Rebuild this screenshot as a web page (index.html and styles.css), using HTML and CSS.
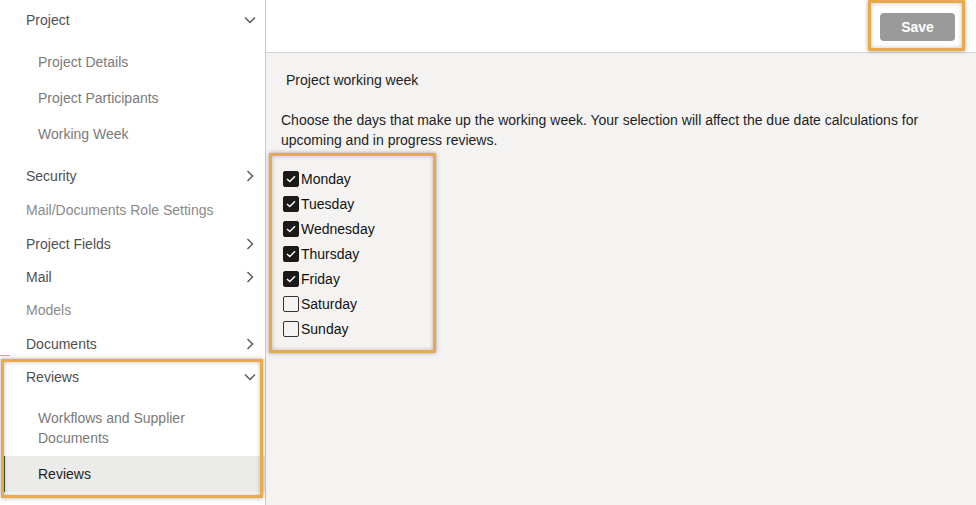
FILE: index.html
```html
<!DOCTYPE html>
<html lang="en">
<head>
<meta charset="utf-8">
<title>Project working week</title>
<link rel="stylesheet" href="styles.css">
</head>
<body>
<div class="app">
  <nav class="sidebar">
    <div class="nav-item first"><span>Project</span>
      <svg class="chev" width="12" height="8" viewBox="0 0 12 8"><path d="M1 1.5 L6 6.5 L11 1.5" fill="none" stroke="#555" stroke-width="1.4"/></svg>
    </div>
    <div class="sub">
      <div class="sub-item">Project Details</div>
      <div class="sub-item">Project Participants</div>
      <div class="sub-item">Working Week</div>
    </div>
    <div class="nav-item"><span>Security</span>
      <svg class="chev" width="12" height="12" viewBox="0 0 12 12"><path d="M3.5 1 L8.5 6 L3.5 11" fill="none" stroke="#555" stroke-width="1.4"/></svg>
    </div>
    <div class="nav-item muted"><span>Mail/Documents Role Settings</span></div>
    <div class="nav-item tight"><span>Project Fields</span>
      <svg class="chev" width="12" height="12" viewBox="0 0 12 12"><path d="M3.5 1 L8.5 6 L3.5 11" fill="none" stroke="#555" stroke-width="1.4"/></svg>
    </div>
    <div class="nav-item tight"><span>Mail</span>
      <svg class="chev" width="12" height="12" viewBox="0 0 12 12"><path d="M3.5 1 L8.5 6 L3.5 11" fill="none" stroke="#555" stroke-width="1.4"/></svg>
    </div>
    <div class="nav-item muted"><span>Models</span></div>
    <div class="nav-item tight"><span>Documents</span>
      <svg class="chev" width="12" height="12" viewBox="0 0 12 12"><path d="M3.5 1 L8.5 6 L3.5 11" fill="none" stroke="#555" stroke-width="1.4"/></svg>
    </div>
    <div class="nav-item tight"><span>Reviews</span>
      <svg class="chev" width="12" height="8" viewBox="0 0 12 8"><path d="M1 1.5 L6 6.5 L11 1.5" fill="none" stroke="#555" stroke-width="1.4"/></svg>
    </div>
    <div class="sub sub-reviews">
      <div class="sub-item wrap">Workflows and Supplier<br>Documents</div>
      <div class="sub-item selected">Reviews</div>
    </div>
  </nav>
  <main class="main">
    <header class="topbar">
      <button class="save">Save</button>
    </header>
    <section class="content">
      <h1 class="title">Project working week</h1>
      <p class="desc">Choose the days that make up the working week. Your selection will affect the due date calculations for upcoming and in progress reviews.</p>
      <ul class="days">
        <li><span class="box on"><svg width="10" height="8" viewBox="0 0 10 8"><path d="M1 4 L3.8 6.6 L9 1.2" fill="none" stroke="#fff" stroke-width="1.4"/></svg></span>Monday</li>
        <li><span class="box on"><svg width="10" height="8" viewBox="0 0 10 8"><path d="M1 4 L3.8 6.6 L9 1.2" fill="none" stroke="#fff" stroke-width="1.4"/></svg></span>Tuesday</li>
        <li><span class="box on"><svg width="10" height="8" viewBox="0 0 10 8"><path d="M1 4 L3.8 6.6 L9 1.2" fill="none" stroke="#fff" stroke-width="1.4"/></svg></span>Wednesday</li>
        <li><span class="box on"><svg width="10" height="8" viewBox="0 0 10 8"><path d="M1 4 L3.8 6.6 L9 1.2" fill="none" stroke="#fff" stroke-width="1.4"/></svg></span>Thursday</li>
        <li><span class="box on"><svg width="10" height="8" viewBox="0 0 10 8"><path d="M1 4 L3.8 6.6 L9 1.2" fill="none" stroke="#fff" stroke-width="1.4"/></svg></span>Friday</li>
        <li><span class="box"></span>Saturday</li>
        <li><span class="box"></span>Sunday</li>
      </ul>
    </section>
  </main>
  <div class="hl hl-save"></div>
  <div class="hl hl-days"></div>
  <div class="hl hl-reviews"></div>
  <div class="hl-tick"></div>
</div>
</body>
</html>
```
FILE: styles.css
```css
* { box-sizing: border-box; }
html, body { margin: 0; padding: 0; }
body {
  font-family: "Liberation Sans", Arial, sans-serif;
  font-size: 14px;
  color: #222;
  background: #f4f3f2;
  overflow: hidden;
}
.app {
  position: relative;
  display: flex;
  width: 976px;
  height: 505px;
}
.sidebar {
  width: 266px;
  flex: none;
  background: #fff;
  border-right: 1px solid #c9c9c9;
  display: flex;
  flex-direction: column;
}
.nav-item {
  height: 34px;
  display: flex;
  align-items: center;
  justify-content: space-between;
  padding: 0 9px 0 26px;
  color: #4f4f4f;
  flex: none;
}
.nav-item.tight { height: 33px; }
.nav-item.first { height: 40px; }
.nav-item.muted { color: #8a8a8a; }
.chev { display: block; }
.sub {
  display: flex;
  flex-direction: column;
  padding: 4px 0 7px;
}
.sub-item {
  height: 36px;
  display: flex;
  align-items: center;
  padding-left: 38px;
  color: #7a7a7a;
}
.sub-reviews { padding: 7px 0 0; }
.sub-item.wrap {
  height: auto;
  padding: 8px 0 8px 38px;
  line-height: 20px;
}
.sub-item.selected {
  margin-left: 4px;
  padding-left: 33px;
  border-left: 1px solid #2f5a2f;
  background: #ebebea;
  color: #1e1e1e;
}
.main {
  flex: 1;
  display: flex;
  flex-direction: column;
  background: #f4f3f2;
}
.topbar {
  height: 53px;
  flex: none;
  background: #fff;
  border-bottom: 1px solid #d2d2d2;
  display: flex;
  justify-content: flex-end;
  align-items: flex-start;
  padding: 13px 21px 0 0;
}
.save {
  width: 75px;
  height: 28px;
  border: none;
  border-radius: 4px;
  background: #9a9a9a;
  color: #fff;
  font-family: "Liberation Sans", Arial, sans-serif;
  font-size: 14px;
  font-weight: bold;
  padding: 0;
}
.content { padding: 0 15px; }
.title {
  margin: 17px 0 0;
  padding-left: 5px;
  font-size: 14px;
  font-weight: normal;
  line-height: 20px;
  color: #222;
}
.desc {
  margin: 20px 0 0;
  line-height: 20px;
  color: #1e1e1e;
}
.days {
  list-style: none;
  margin: 16.5px 0 0;
  padding: 0 0 0 2px;
}
.days li {
  height: 25px;
  display: flex;
  align-items: center;
  gap: 2px;
  color: #111;
}
.box {
  width: 16px;
  height: 16px;
  border: 1px solid #333;
  border-radius: 2px;
  display: flex;
  align-items: center;
  justify-content: center;
  background: transparent;
}
.box.on {
  background: #1b1a19;
  border-color: #1b1a19;
}
.box svg { display: block; }
.hl {
  position: absolute;
  border: 3px solid #e9a94d;
  box-shadow: 0 0 4px rgba(0,0,0,0.35), inset 0 0 4px rgba(0,0,0,0.25);
  pointer-events: none;
}
.hl-save { left: 868px; top: 0; width: 97px; height: 51px; }
.hl-days { left: 269px; top: 153px; width: 167px; height: 200px; }
.hl-reviews { left: 1px; top: 359px; width: 262px; height: 139px; }
.hl-tick {
  position: absolute;
  left: 0;
  top: 355px;
  width: 10px;
  height: 1px;
  background: #e9a94d;
}
```
